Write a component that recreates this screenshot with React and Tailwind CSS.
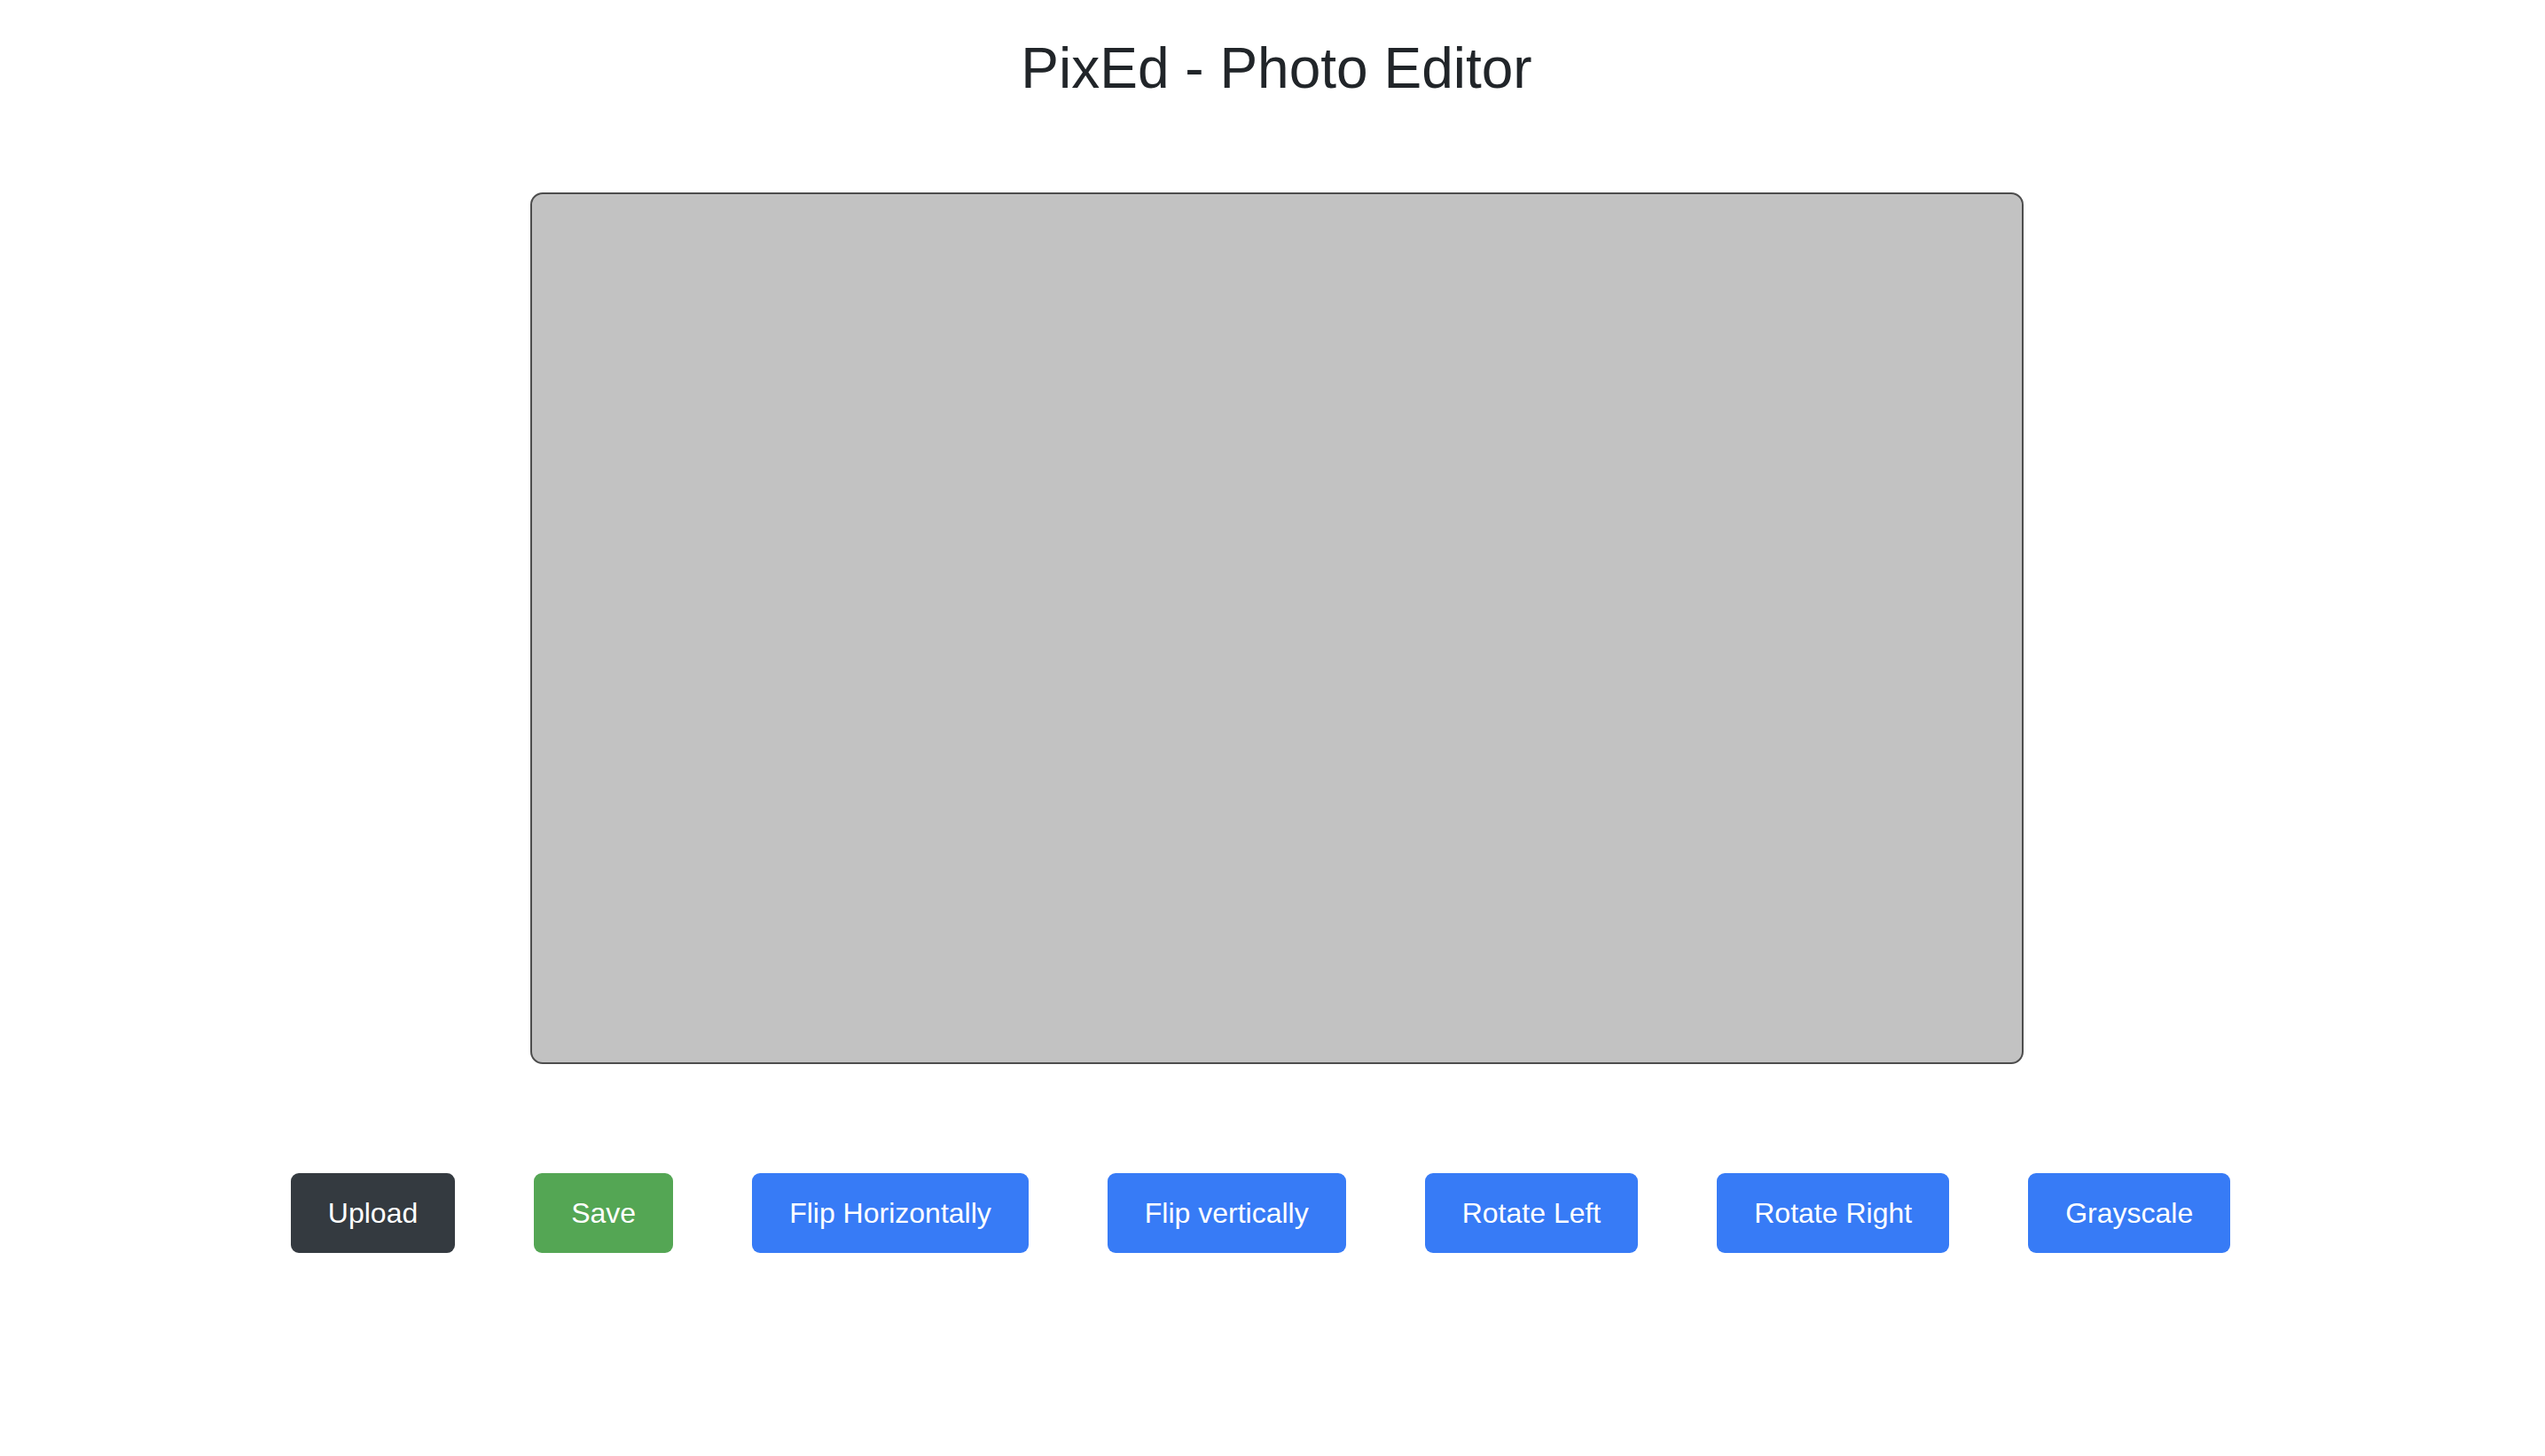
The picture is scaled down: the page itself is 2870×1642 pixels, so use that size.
const buttons = [
    { label: 'Upload', cls: 'bg-[#343a40]' },
    { label: 'Save', cls: 'bg-[#54a654]' },
    { label: 'Flip Horizontally', cls: 'bg-[#377bf6]' },
    { label: 'Flip vertically', cls: 'bg-[#377bf6]' },
    { label: 'Rotate Left', cls: 'bg-[#377bf6]' },
    { label: 'Rotate Right', cls: 'bg-[#377bf6]' },
    { label: 'Grayscale', cls: 'bg-[#377bf6]' },
];

export default function App() {
    return (
        <div className="min-h-screen bg-white font-['Liberation_Sans',Arial,sans-serif] text-[#212529]">
            {/* Header + canvas */}
            <div className="flex flex-col items-center pt-[45px] pl-[9px]">
                <h1 className="text-[64px] leading-none font-normal">PixEd - Photo Editor</h1>
                <div className="mt-[108px] w-[1684px] h-[983px] bg-[#c2c2c2] border-2 border-[#4d4d4d] rounded-[14px]" />
            </div>

            {/* Toolbar */}
            <div className="flex justify-center gap-[89px] mt-[123px] pr-[27px]">
                {buttons.map((b) => (
                    <button
                        key={b.label}
                        className={`${b.cls} h-[90px] px-[42px] rounded-[9px] text-white text-[32px] leading-none flex items-center`}
                    >
                        {b.label}
                    </button>
                ))}
            </div>
        </div>
    );
}
